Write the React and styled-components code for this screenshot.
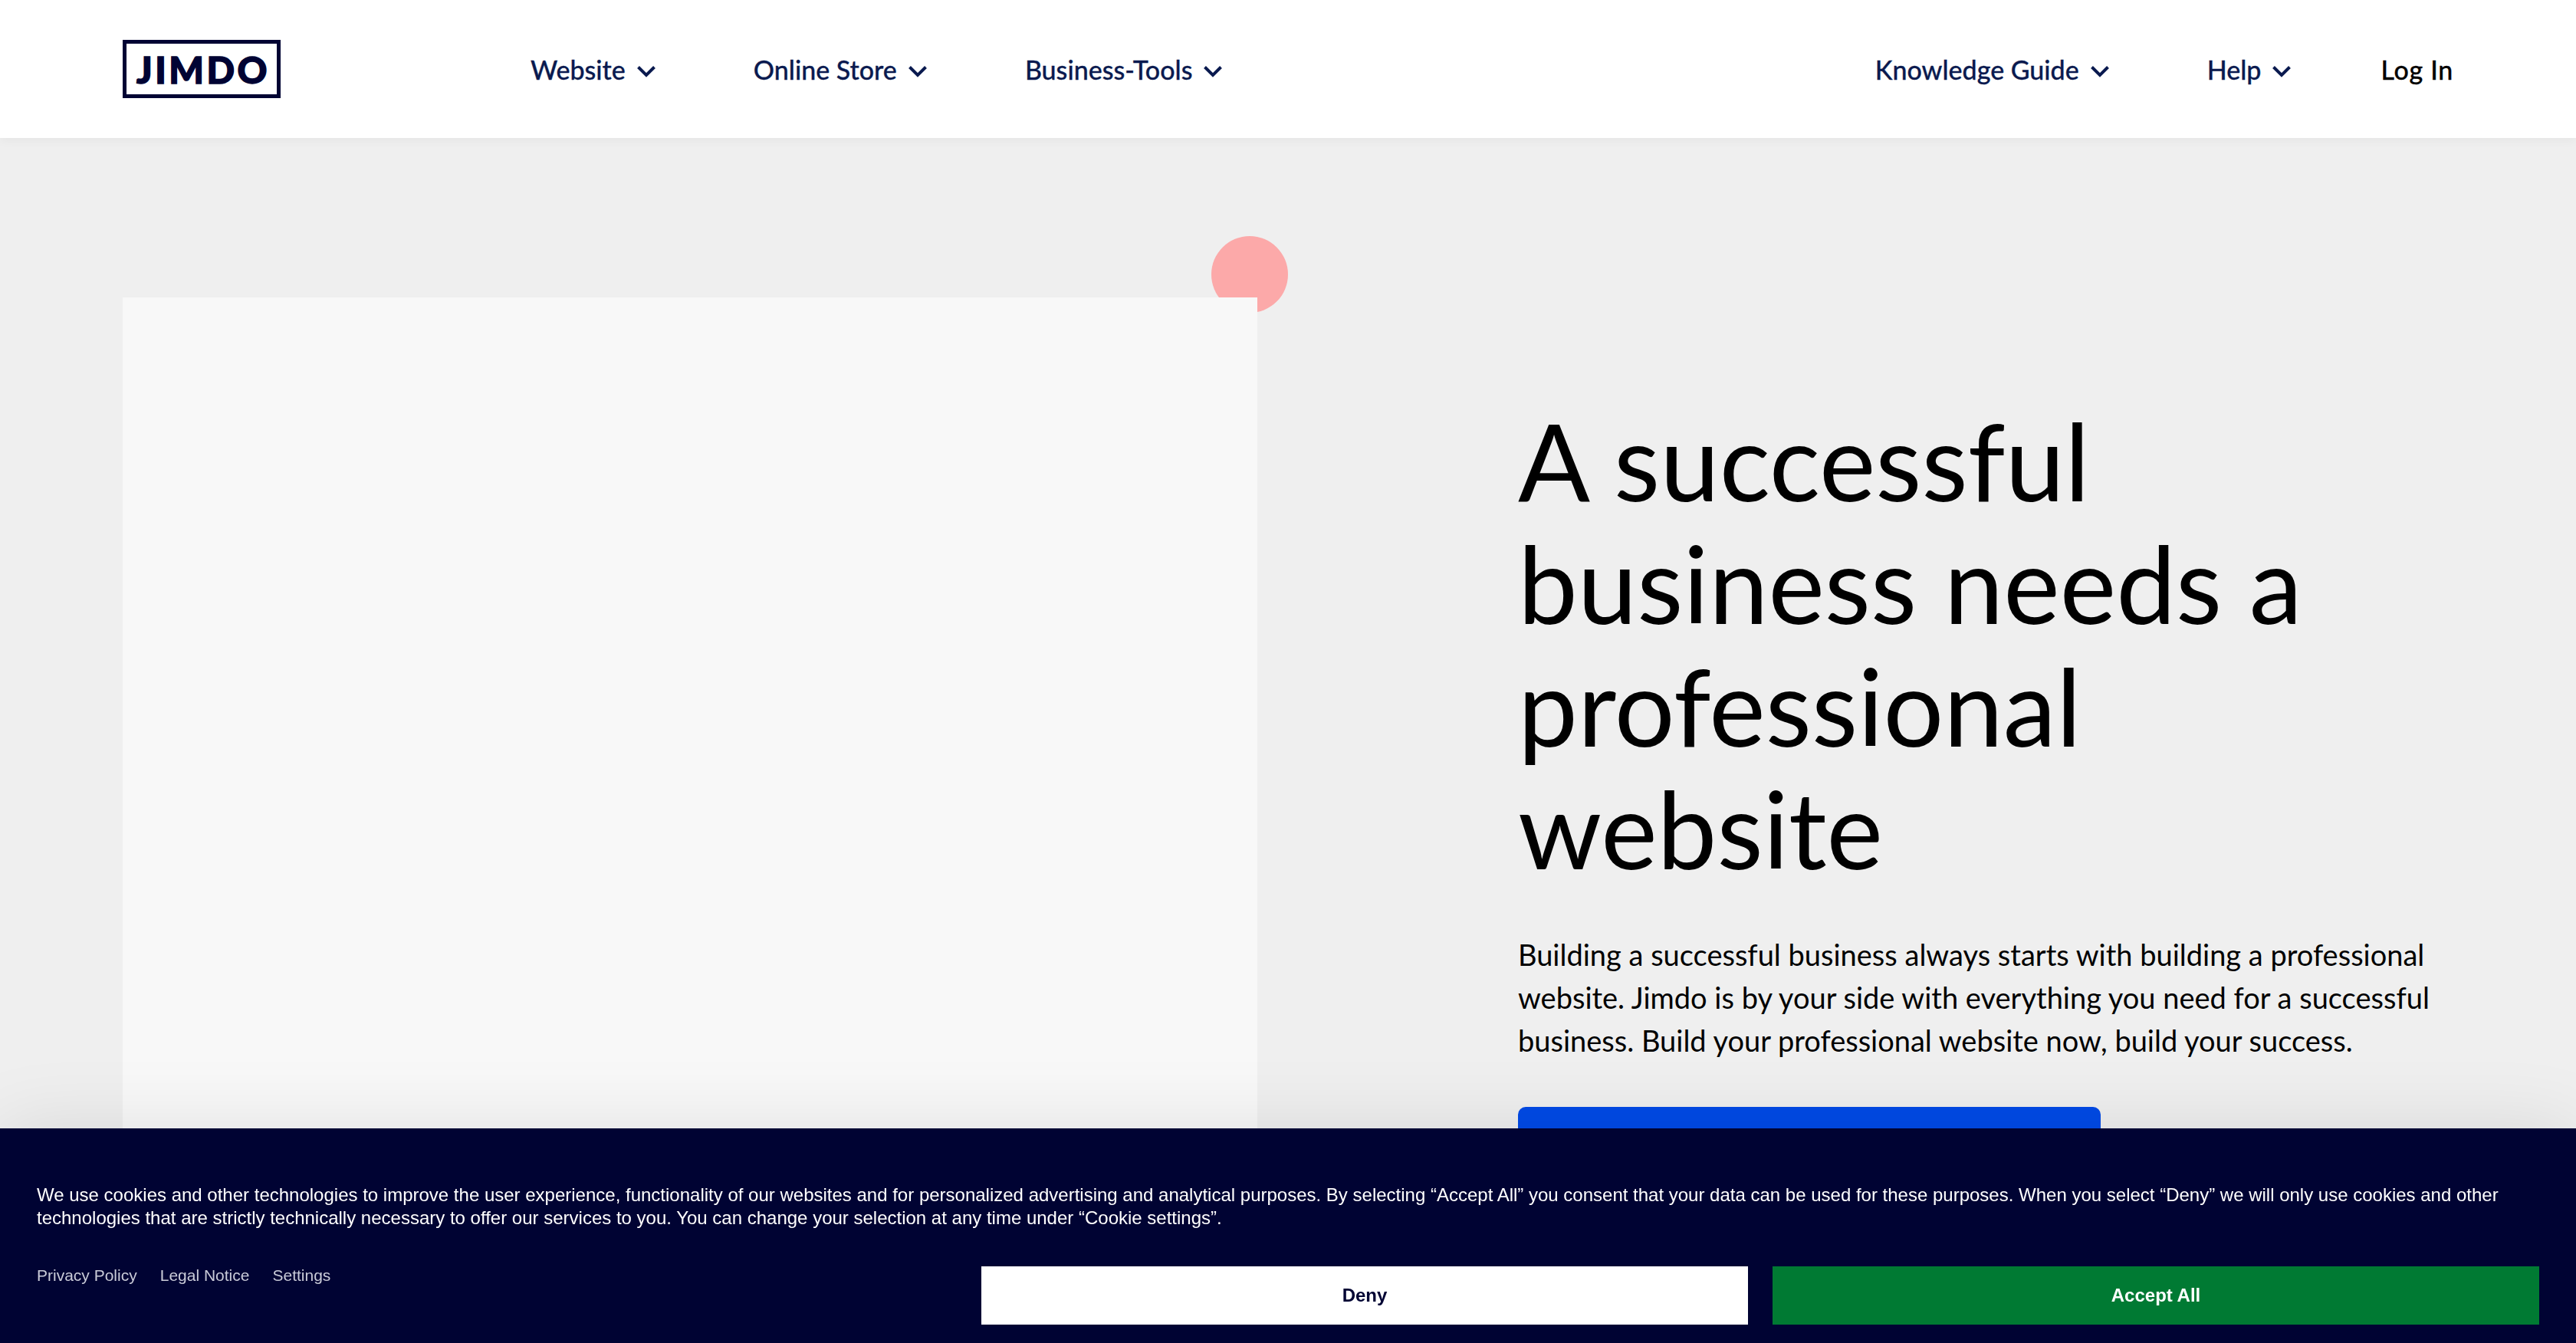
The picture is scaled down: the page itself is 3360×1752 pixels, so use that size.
import React from "react";
import styled, { createGlobalStyle } from "styled-components";

const Global = createGlobalStyle`
  html, body { margin: 0; padding: 0; height: 100%; overflow: hidden; background: #efefef; }
  * { box-sizing: border-box; }
`;

const Page = styled.div`
  height: 1752px;
  overflow: hidden;
  background: #efefef;
  font-family: "Lato", "Liberation Sans", sans-serif;
`;

const Header = styled.header`
  height: 180px;
  background: #ffffff;
  box-shadow: 0 2px 14px rgba(0, 0, 0, 0.05);
  display: flex;
  align-items: center;
  padding: 0 160px;
  position: relative;
`;

const Logo = styled.div`
  width: 206px;
  height: 76px;
  border: 5px solid #000333;
  display: flex;
  align-items: center;
  justify-content: center;
  padding-left: 4px;
  color: #000333;
  font-family: "Lato", sans-serif;
  font-weight: 900;
  font-size: 48px;
  letter-spacing: 3.5px;
  -webkit-text-stroke: 1.5px #000333;
`;

const MainNav = styled.nav`
  display: flex;
  gap: 128px;
  margin-left: 326px;
`;

const RightNav = styled.nav`
  display: flex;
  align-items: center;
  gap: 128px;
  margin-left: auto;
`;

const NavItem = styled.a`
  display: flex;
  align-items: center;
  gap: 15px;
  font-size: 34px;
  font-weight: 500;
  color: #0a1a4f;
  -webkit-text-stroke: 0.3px currentColor;
`;

const LogIn = styled(NavItem)`
  margin-left: -11px;
  color: #000000;
  letter-spacing: 0.7px;
`;

const ChevronSvg = styled.svg`
  width: 24px;
  height: 15px;
  margin-top: 6px;
  flex: none;
`;

const Chevron = () => (
  <ChevronSvg viewBox="0 0 24 15" fill="none">
    <path d="M1.5 1.5 L12 12 L22.5 1.5" stroke="#0a1a4f" strokeWidth="4" />
  </ChevronSvg>
);

const Hero = styled.main`
  display: grid;
  grid-template-columns: 1480px 1fr;
  gap: 340px;
  padding: 208px 160px 0;
`;

const Media = styled.div`
  position: relative;
  height: 1400px;
  background: #f8f8f8;
`;

const Dot = styled.div`
  position: absolute;
  top: -80px;
  right: -40px;
  width: 100px;
  height: 100px;
  border-radius: 50%;
  background: #fca9a9;
`;

const MediaFace = styled.div`
  position: absolute;
  inset: 0;
  background: #f8f8f8;
`;

const Copy = styled.div`
  padding-top: 133px;
`;

const Title = styled.h1`
  margin: 0;
  font-size: 139px;
  line-height: 160px;
  font-weight: 400;
  color: #000000;
`;

const Lead = styled.p`
  margin: 56px 0 0;
  font-size: 38px;
  line-height: 56px;
  color: #000000;
  width: 1220px;
`;

const Cta = styled.div`
  margin-top: 59px;
  width: 760px;
  height: 130px;
  border-radius: 10px;
  background: #004ae6;
`;

const Banner = styled.section`
  position: fixed;
  left: 0;
  right: 0;
  bottom: 0;
  height: 280px;
  background: #000333;
  box-shadow: 0 0 100px rgba(0, 0, 0, 0.1);
  padding: 72px 48px 0;
  font-family: "Liberation Sans", Arial, sans-serif;
`;

const Notice = styled.p`
  margin: 0;
  color: #ffffff;
  font-size: 24px;
  line-height: 30px;
`;

const BannerFoot = styled.div`
  display: flex;
  justify-content: space-between;
  align-items: flex-start;
  margin-top: 48px;
`;

const Links = styled.div`
  display: flex;
  gap: 30px;
`;

const FootLink = styled.a`
  font-size: 21px;
  line-height: 24px;
  color: #c9cbd8;
`;

const Buttons = styled.div`
  display: flex;
  gap: 32px;
`;

const Choice = styled.button`
  width: 1000px;
  height: 76px;
  border: 0;
  font-family: inherit;
  font-size: 24px;
  font-weight: 700;
  background: ${(p) => (p.$primary ? "#007a33" : "#ffffff")};
  color: ${(p) => (p.$primary ? "#ffffff" : "#000333")};
`;

export default function App() {
  return (
    <Page>
      <Global />
      <Header>
        <Logo>JIMDO</Logo>
        <MainNav>
          <NavItem>Website <Chevron /></NavItem>
          <NavItem>Online Store <Chevron /></NavItem>
          <NavItem>Business-Tools <Chevron /></NavItem>
        </MainNav>
        <RightNav>
          <NavItem>Knowledge Guide <Chevron /></NavItem>
          <NavItem>Help <Chevron /></NavItem>
          <LogIn>Log In</LogIn>
        </RightNav>
      </Header>
      <Hero>
        <Media>
          <Dot />
          <MediaFace />
        </Media>
        <Copy>
          <Title>A successful business needs a professional website</Title>
          <Lead>Building a successful business always starts with building a professional website. Jimdo is by your side with everything you need for a successful business. Build your professional website now, build your success.</Lead>
          <Cta />
        </Copy>
      </Hero>
      <Banner>
        <Notice>We use cookies and other technologies to improve the user experience, functionality of our websites and for personalized advertising and analytical purposes. By selecting “Accept All” you consent that your data can be used for these purposes. When you select “Deny” we will only use cookies and other technologies that are strictly technically necessary to offer our services to you. You can change your selection at any time under “Cookie settings”.</Notice>
        <BannerFoot>
          <Links>
            <FootLink>Privacy Policy</FootLink>
            <FootLink>Legal Notice</FootLink>
            <FootLink>Settings</FootLink>
          </Links>
          <Buttons>
            <Choice>Deny</Choice>
            <Choice $primary>Accept All</Choice>
          </Buttons>
        </BannerFoot>
      </Banner>
    </Page>
  );
}
